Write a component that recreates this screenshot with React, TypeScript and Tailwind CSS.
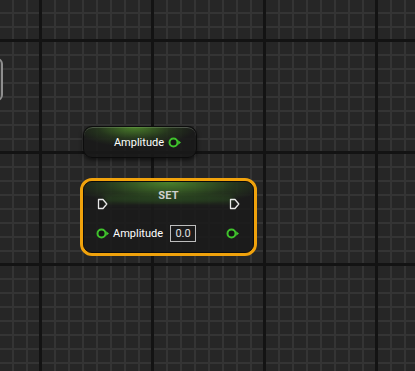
import React from "react";

function ExecPin() {
  return (
    <svg width="11" height="12" viewBox="0 0 11 12">
      <path d="M1.5 1.5 H6 L9.8 6 L6 10.5 H1.5 Z" fill="none" stroke="#e8e8e8" strokeWidth="1.3" strokeLinejoin="round" />
    </svg>
  );
}

function DataPin() {
  return (
    <svg width="14" height="11" viewBox="0 0 14 11">
      <circle cx="5.5" cy="5.5" r="4" fill="#141414" stroke="#3fc22c" strokeWidth="2" />
      <path d="M10.2 3.2 L13 5.5 L10.2 7.8 Z" fill="#3fc22c" />
    </svg>
  );
}

export default function App() {
  return (
    <div
      className="relative w-[415px] h-[371px] overflow-hidden bg-[#262626] font-['Roboto',_'Liberation_Sans',_sans-serif]
        [background-image:linear-gradient(to_right,#131313_3px,transparent_3px),linear-gradient(to_bottom,#131313_3px,transparent_3px),linear-gradient(to_right,#343434_2px,transparent_2px),linear-gradient(to_bottom,#343434_2px,transparent_2px)]
        [background-size:112px_112px,112px_112px,14px_14px,14px_14px]
        [background-position:39px_39px,39px_39px,12px_12px,12px_12px]"
    >
      {/* partially visible node on the left edge */}
      <div className="absolute left-[-20px] top-[58px] w-[23px] h-[43px] rounded-md border-2 border-[#8e8e8e] bg-[#3a3a3a]" />

      {/* getter node */}
      <div className="absolute left-[83px] top-[126px] w-[114px] h-[32px] rounded-[9px] border border-[#0c0c0c] bg-[#1a1a1a]/90 shadow-[0_2px_4px_rgba(0,0,0,0.6)] overflow-hidden">
        <div className="absolute inset-0 rounded-[9px] border-t border-[#6a6a6a]/70" />
        <div className="absolute inset-x-0 top-0 h-[20px] bg-[radial-gradient(ellipse_55%_100%_at_45%_0%,rgba(95,170,50,0.7),rgba(60,110,35,0.3)_60%,transparent_100%)]" />
        <div className="relative flex items-center justify-end h-full pr-[14px] gap-[4px]">
          <span className="text-[11px] text-white leading-none">Amplitude</span>
          <DataPin />
        </div>
      </div>

      {/* SET node (selected) */}
      <div className="absolute left-[80px] top-[178px] w-[177px] h-[78px] rounded-[12px] border-[3px] border-[#f0a20c] shadow-[inset_0_0_0_1px_#b86a00]">
        <div className="relative h-full rounded-[9px] bg-[#1b1b1b]/90 overflow-hidden border border-[#0c0c0c]">
          <div className="absolute inset-x-0 top-0 h-[22px] bg-[radial-gradient(ellipse_60%_110%_at_50%_0%,rgba(90,165,50,0.75),rgba(55,105,35,0.35)_65%,transparent_100%)]" />
          <div className="absolute inset-x-[20px] top-[14px] h-[7px] bg-[#2f5a22]/40 blur-[2px]" />
          <div className="relative flex flex-col h-full">
            <div className="h-[19px] flex items-end justify-center">
              <span className="text-[11px] font-bold text-[#cfcfcf] leading-none tracking-wide">SET</span>
            </div>
            <div className="flex items-center justify-between px-[13px] h-[12px] mt-[-3px]">
              <ExecPin />
              <ExecPin />
            </div>
            <div className="flex items-center justify-between pl-[12px] pr-[13px] mt-[14px] h-[18px]">
              <div className="flex items-center gap-[3px]">
                <DataPin />
                <span className="text-[11px] text-white leading-none">Amplitude</span>
                <div className="ml-[4px] w-[26px] h-[17px] border border-[#bdbdbd] flex items-center justify-center">
                  <span className="text-[11px] text-[#e0e0e0] leading-none">0.0</span>
                </div>
              </div>
              <DataPin />
            </div>
          </div>
        </div>
      </div>
    </div>
  );
}
